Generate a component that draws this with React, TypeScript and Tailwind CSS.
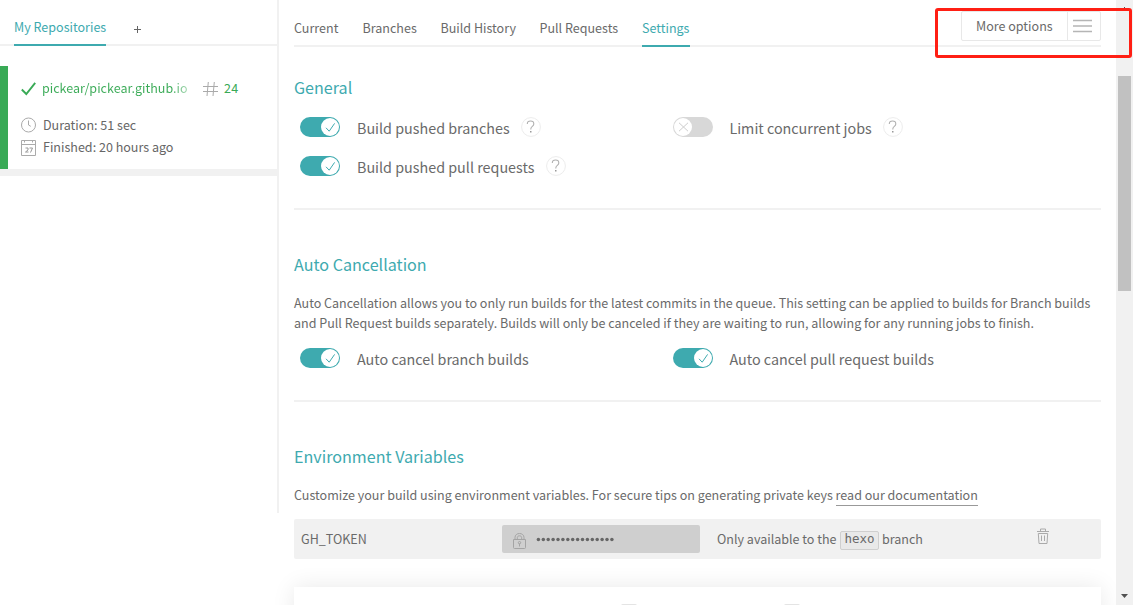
import React from "react";

const TABS = [
  { label: "Current", box: "w-[44px] mr-[24.5px]" },
  { label: "Branches", box: "w-[54px] mr-[24px]" },
  { label: "Build History", box: "w-[76px] mr-[23px]" },
  { label: "Pull Requests", box: "w-[79px] mr-[23.5px]" },
];

function Toggle({ on = true }: { on?: boolean }) {
  return on ? (
    <span className="flex h-5 w-10 shrink-0 justify-end rounded-full bg-[#3eaaaf] p-px">
      <svg className="h-[18px] w-[18px] rounded-full bg-white" viewBox="0 0 18 18" fill="none" stroke="#3eaaaf" strokeWidth="1">
        <path d="M5 9.8 8.2 13.2 13.6 5.4" />
      </svg>
    </span>
  ) : (
    <span className="flex h-5 w-10 shrink-0 rounded-full bg-[#d8d8d8] p-px">
      <svg className="h-[18px] w-[18px] rounded-full bg-white" viewBox="0 0 18 18" fill="none" stroke="#cdcdcd" strokeWidth="1">
        <path d="M5 4.8 14 13.2M14 4.8 5 13.2" />
      </svg>
    </span>
  );
}

function Help() {
  return (
    <svg className="h-5 w-5 shrink-0" viewBox="0 0 20 20" fill="none">
      <circle cx="10" cy="10" r="9.4" stroke="#ececec" />
      <path d="M6.3 6.9C6.3 5 7.7 4 9.6 4s3.2 1.100 3.200 2.900c0 2.400-3 2.500-3 5v.5" stroke="#b0b0b0" strokeWidth="1.100" />
      <path d="M9 14.700h1.500" stroke="#999" strokeWidth="1.500" />
    </svg>
  );
}

function Option({ label, on = true, help = false, text }: { label: string; on?: boolean; help?: boolean; text: string }) {
  return (
    <div className="flex h-5 items-start">
      <Toggle on={on} />
      <span className={`mt-px shrink-0 whitespace-nowrap text-[14.33px] leading-5 ${text}`}>{label}</span>
      {help && <Help />}
    </div>
  );
}

function Heading({ children }: { children: React.ReactNode }) {
  return <h2 className="whitespace-nowrap text-[16.12px] leading-6 text-[#3eaaaf]">{children}</h2>;
}

function Sidebar() {
  return (
    <aside className="h-[513px] w-[279px] shrink-0 border-r-2 border-[#f1f1f1]">
      <div className="flex h-[46px] border-b-2 border-[#f1f1f1] pl-3.5">
        <div className="h-[46px] w-[92px] shrink-0 whitespace-nowrap border-b-2 border-[#3eaaaf] pt-[17px] leading-5 text-[#3eaaaf]">
          My Repositories
        </div>
        <svg className="ml-7 mt-[25px] h-2 w-2" viewBox="0 0 8 8" stroke="#666">
          <path d="M0 4.500H7M3.500 1V8" />
        </svg>
      </div>
      <div className="mt-5 h-[110px] border-b-[7px] border-[#f1f1f1]">
        <div className="h-[103px] border-l-8 border-[#39aa56] pl-[13px]">
          <div className="flex pt-3 leading-5 text-[#39aa56]">
            <svg className="mt-[4px] h-[14px] w-[15px]" viewBox="0 0 15 14" fill="none" stroke="#39aa56" strokeWidth="1.900">
              <path d="M.8 7.500 5.300 12 14.200.8" />
            </svg>
            <span className="ml-1.5 w-[147px] shrink-0 whitespace-nowrap bg-gradient-to-r from-[#39aa56] from-88% to-[#39aa5660] bg-clip-text text-transparent">
              pickear/pickear.github.io
            </span>
            <svg className="ml-3.5 mt-[4px] h-[14px] w-[15px]" viewBox="0 0 15 14" fill="none" stroke="#aaa">
              <path d="M0 4.500H15M0 9.500H15M5.300 0 4 14M11.300 0 10 14" />
            </svg>
            <span className="ml-[6px] tracking-[0.2px]">24</span>
          </div>
          <div className="mt-[17px] flex h-[22px] text-[#666]">
            <svg className="mt-[2px] h-4 w-4" viewBox="0 0 16 16" fill="none" stroke="#aaa">
              <circle cx="7.500" cy="8" r="7" />
              <path d="M7.500 3.500V8L9.800 9.300" />
            </svg>
            <span className="ml-1.5 whitespace-nowrap leading-5">Duration: 51 sec</span>
          </div>
          <div className="flex text-[#666]">
            <svg className="mt-[3px] h-4 w-4" viewBox="0 0 16 16" fill="none" stroke="#aaa">
              <path d="M.5.500H14.500V15.500H.5ZM.5 4.500H14.500M3.500.500V2.500M11.500.500V2.500" />
              <path d="M4.500 8H7V10L4.500 12H7.500M8.500 8H11.500L9.500 12.500" stroke="#999" />
            </svg>
            <span className="ml-1.5 whitespace-nowrap leading-5">Finished: 20 hours ago</span>
          </div>
        </div>
      </div>
    </aside>
  );
}

function TabBar() {
  return (
    <div className="flex h-[47px] border-b-2 border-[#f1f1f1]">
      {TABS.map((t) => (
        <div key={t.label} className={`shrink-0 whitespace-nowrap pt-[18px] leading-5 ${t.box}`}>
          {t.label}
        </div>
      ))}
      <div className="h-[47px] w-12 whitespace-nowrap border-b-2 border-[#3eaaaf] pt-[18px] leading-5 text-[#3eaaaf]">Settings</div>
      <div className="ml-auto mt-[11px] flex h-[30px] w-[140px] rounded-[2px] border border-[#e8e8e8]">
        <span className="w-[106px] whitespace-nowrap border-r border-[#e8e8e8] pl-3.5 pt-1 leading-5">More options</span>
        <svg className="ml-[5px] mt-[7px] h-[14px] w-5" viewBox="0 0 20 14" stroke="#b5b5b5" strokeWidth="1.600">
          <path d="M0 1.500H19M0 7H19M0 12.500H19" />
        </svg>
      </div>
    </div>
  );
}

function EnvRow() {
  return (
    <div className="mt-[13px] flex h-10 rounded-[2px] bg-[#f1f1f1] pl-[7px]">
      <span className="w-[201px] pt-[10px] leading-5">GH_TOKEN</span>
      <div className="mt-1.5 flex h-7 w-[198px] rounded-[2px] bg-[#cfcfcf] pl-[11px]">
        <svg className="mt-2 h-4 w-[13px]" viewBox="0 0 13 16" fill="none" stroke="#a4a4a4">
          <path d="M.5 6.500H12.500V14.500Q12.500 15.500 11.500 15.500H1.500Q.5 15.500.5 14.500ZM2 6.500V4.500C2 2 4 .5 6.500.500S11 2 11 4.500V6.500M4.300 6.500V4.700C4.300 3.500 5.200 2.800 6.500 2.800S8.700 3.500 8.700 4.700V6.500M6.500 10.500V13.500" />
          <circle cx="6.500" cy="9.700" r="1.200" />
        </svg>
        <svg className="ml-2.5 mt-[12px] h-[5px] w-[80px]" viewBox="0 0 80 5" fill="#666">
          {Array.from({ length: 16 }, (_, i) => (
            <circle key={i} cx={2.4 + i * 4.9} cy="2.5" r="1.75" />
          ))}
        </svg>
      </div>
      <span className="ml-[17px] w-[120px] shrink-0 whitespace-nowrap pt-[10px] leading-5">Only available to the</span>
      <code className="ml-[3px] mt-3 h-[19px] w-[39px] shrink-0 rounded-[2px] border border-[#cfcfcf] bg-[#e9e9e9] text-center font-['DejaVu_Sans_Mono','Liberation_Mono',monospace] text-[12.500px] leading-[13px]">
        hexo
      </code>
      <span className="ml-[3px] pt-[10px] leading-5">branch</span>
      <svg className="ml-auto mr-[52px] mt-[9px] h-4 w-3" viewBox="0 0 12 16" fill="none" stroke="#aaa">
        <path d="M0 3.500H12M3.500 3.500V1H8.500V3.500M1.300 5.500 2 15.500H10L10.700 5.500ZM4.500 7.500V13M7.500 7.500V13" />
      </svg>
    </div>
  );
}

export default function App() {
  return (
    <div className="relative flex h-[605px] w-[1133px] overflow-hidden bg-white font-['Noto_Sans_CJK_SC',sans-serif] text-[12.54px] text-[#6a6a6a]">
      <Sidebar />
      <main className="ml-[15px] h-[605px] w-[807px] shrink-0">
        <TabBar />
        <section className="h-[163px] border-b-2 border-[#f1f1f1] pt-[28px]">
          <Heading>General</Heading>
          <div className="mt-[18px] grid grid-cols-[373px_1fr] gap-y-[19px] pl-1.5">
            <Option label="Build pushed branches" help text="ml-[17px] w-[164px]" />
            <Option label="Limit concurrent jobs" on={false} help text="ml-[16.4px] w-[153.6px]" />
            <Option label="Build pushed pull requests" help text="ml-[17px] w-[189px]" />
          </div>
        </section>
        <section className="h-[192px] border-b-2 border-[#f1f1f1] pt-[42px]">
          <Heading>Auto Cancellation</Heading>
          <p className="mt-[17px] whitespace-nowrap leading-5">
            Auto Cancellation allows you to only run builds for the latest commits in the queue. This setting can be applied to builds for Branch builds
            <br />
            and Pull Request builds separately. Builds will only be canceled if they are waiting to run, allowing for any running jobs to finish.
          </p>
          <div className="mt-[15px] grid grid-cols-[373px_1fr] pl-1.5">
            <Option label="Auto cancel branch builds" text="ml-[17px] w-[172px]" />
            <Option label="Auto cancel pull request builds" text="ml-[16.4px] w-[205px]" />
          </div>
        </section>
        <section className="pt-[42px]">
          <Heading>Environment Variables</Heading>
          <p className="mt-[17px] h-[21px] whitespace-nowrap leading-5">
            Customize your build using environment variables. For secure tips on generating private keys{" "}
            <a className="inline-block h-[21px] border-b border-[#999]">read our documentation</a>
          </p>
          <EnvRow />
          <div className="mt-7 flex h-24 pl-[327px] pt-[17px] shadow-[0_0_22px_rgba(0,0,0,0.09)]">
            <div className="h-5 w-4 rounded-[2px] bg-[#e4e4e4]" />
            <div className="ml-[147px] h-5 w-4 rounded-[2px] bg-[#e4e4e4]" />
          </div>
        </section>
      </main>
      <div className="z-10 ml-[15px] flex h-[605px] w-[17px] shrink-0 flex-col items-center bg-[#f1f1f1]">
        <div className="mt-[7px] h-px w-px bg-[#505050]" />
        <div className="mt-[68px] h-[215px] w-[13px] bg-[#c1c1c1]" />
        <svg className="mt-auto mb-[7px] h-1 w-[7px]" viewBox="0 0 7 4" fill="#505050">
          <path d="M0 0H7L3.500 4Z" />
        </svg>
      </div>
      <div className="absolute left-[935px] top-2 z-20 h-[50px] w-[197px] rounded-[3px] border-[3px] border-[#ff1f14]" />
    </div>
  );
}
